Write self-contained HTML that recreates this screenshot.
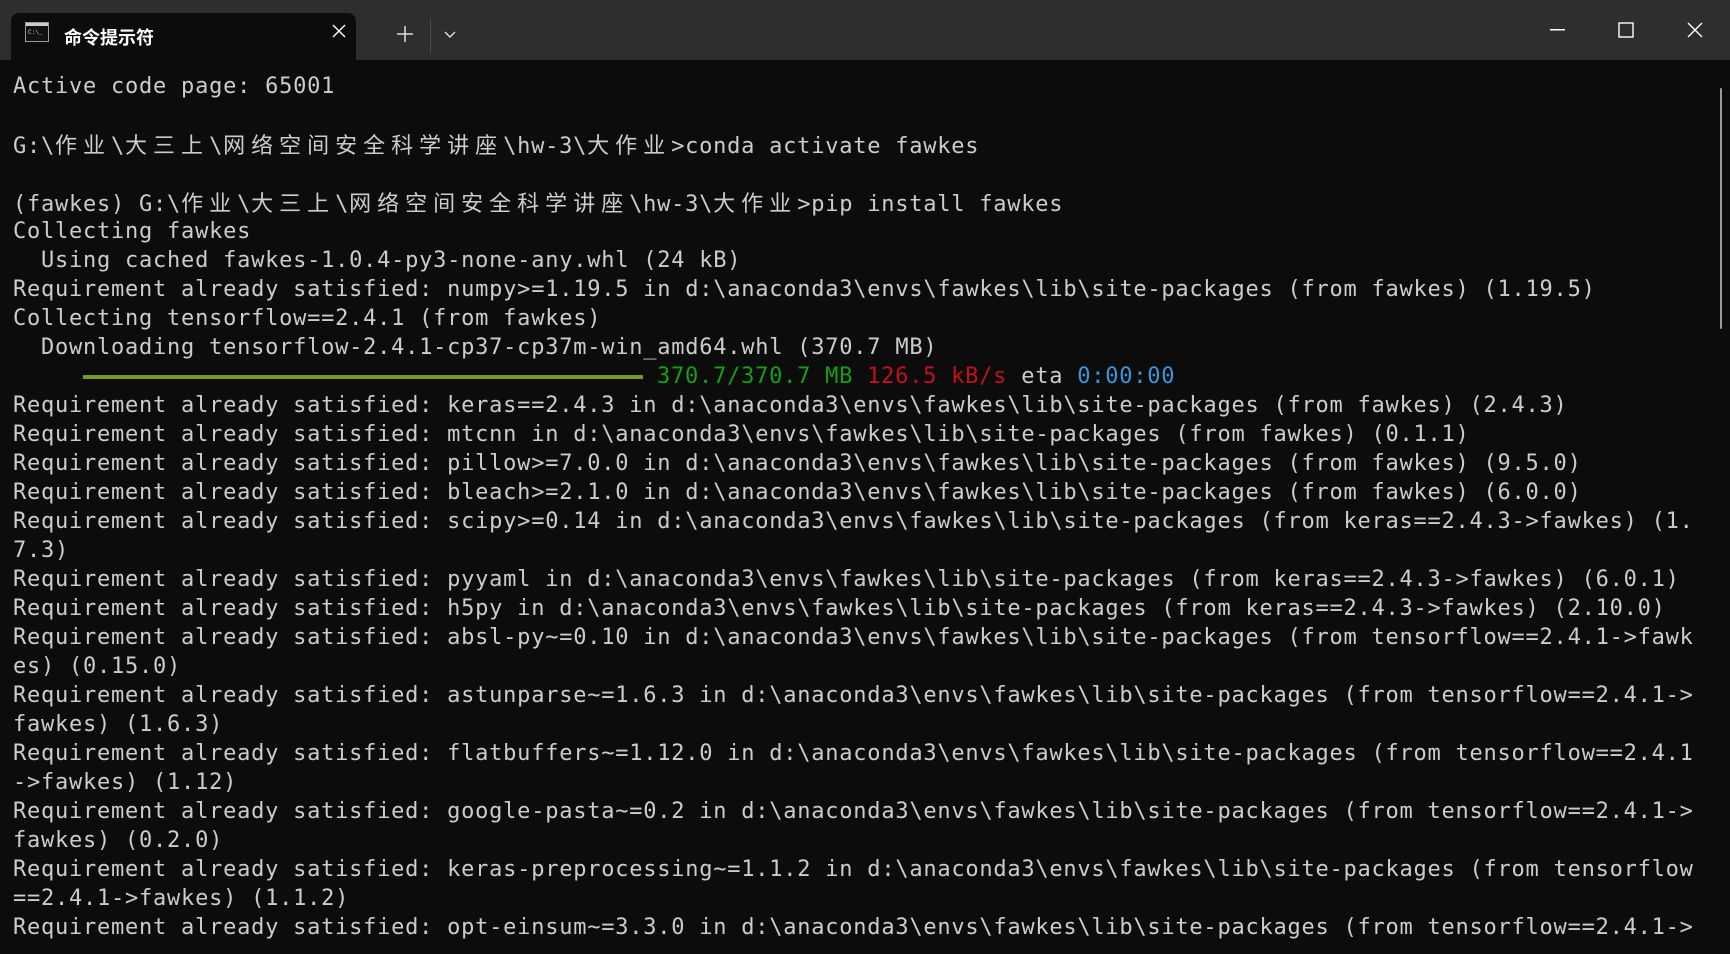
<!DOCTYPE html>
<html><head><meta charset="utf-8"><style>
html,body{margin:0;padding:0;background:#0c0c0c;width:1730px;height:954px;overflow:hidden}
#bar{position:absolute;left:0;top:0;width:1730px;height:60px;background:#2e2e2e}
#tab{position:absolute;left:11px;top:13px;width:345px;height:47px;background:#0c0c0c;border-radius:8px 8px 0 0}
#title{position:absolute;left:64px;top:24px;color:#fff;font:bold 18px "Liberation Sans","Noto Sans CJK SC",sans-serif}
#term{position:absolute;left:13px;top:72px;color:#cccccc;font-family:"DejaVu Sans Mono",monospace;font-size:22px;letter-spacing:0.76px;white-space:pre}
#term div{height:29px;line-height:29px}
.c{font-family:"Noto Sans CJK SC",sans-serif;letter-spacing:6px;font-size:22px}
.pb{display:inline-block;width:560px;height:4px;background:#729c1f;vertical-align:middle}
.g{color:#13a10e}.r{color:#c50f1f}.b{color:#3a96dd}
svg{position:absolute}
</style></head><body>
<div id="bar"></div>
<div id="tab"></div>
<svg style="left:25px;top:22px" width="24" height="20" viewBox="0 0 24 20"><rect x="0.5" y="0.5" width="23" height="19" fill="#111" stroke="#999"/><rect x="1" y="1" width="22" height="3" fill="#ccc"/><text x="3" y="12" font-size="6" fill="#ccc" font-family="Liberation Mono">C:\_</text></svg>
<div id="title">命令提示符</div>
<svg style="left:332px;top:24px" width="14" height="14"><path d="M1 1L13 13M13 1L1 13" stroke="#fff" stroke-width="1.4"/></svg>
<svg style="left:396px;top:25px" width="18" height="18"><path d="M9 1V17M1 9H17" stroke="#ddd" stroke-width="1.5"/></svg>
<div style="position:absolute;left:430px;top:19px;width:1px;height:34px;background:#4a4a4a"></div>
<svg style="left:444px;top:31px" width="12" height="8"><path d="M1 1L6 6L11 1" fill="none" stroke="#ddd" stroke-width="1.4"/></svg>
<svg style="left:1550px;top:29px" width="16" height="2"><rect width="15" height="1.5" fill="#fff"/></svg>
<svg style="left:1618px;top:22px" width="16" height="16"><rect x="1" y="1" width="14" height="14" fill="none" stroke="#fff" stroke-width="1.4"/></svg>
<svg style="left:1687px;top:22px" width="16" height="16"><path d="M1 1L15 15M15 1L1 15" stroke="#fff" stroke-width="1.4"/></svg>
<div style="position:absolute;left:1720px;top:88px;width:2px;height:241px;background:#9a9a9a;border-radius:1px"></div>
<div id="term"><div>Active code page: 65001</div><div> </div><div>G:\<span class="c">作业</span>\<span class="c">大三上</span>\<span class="c">网络空间安全科学讲座</span>\hw-3\<span class="c">大作业</span>&gt;conda activate fawkes</div><div> </div><div>(fawkes) G:\<span class="c">作业</span>\<span class="c">大三上</span>\<span class="c">网络空间安全科学讲座</span>\hw-3\<span class="c">大作业</span>&gt;pip install fawkes</div><div>Collecting fawkes</div><div>  Using cached fawkes-1.0.4-py3-none-any.whl (24 kB)</div><div>Requirement already satisfied: numpy&gt;=1.19.5 in d:\anaconda3\envs\fawkes\lib\site-packages (from fawkes) (1.19.5)</div><div>Collecting tensorflow==2.4.1 (from fawkes)</div><div>  Downloading tensorflow-2.4.1-cp37-cp37m-win_amd64.whl (370.7 MB)</div><div>     <span class="pb"></span> <span class="g">370.7/370.7 MB</span> <span class="r">126.5 kB/s</span> eta <span class="b">0:00:00</span></div><div>Requirement already satisfied: keras==2.4.3 in d:\anaconda3\envs\fawkes\lib\site-packages (from fawkes) (2.4.3)</div><div>Requirement already satisfied: mtcnn in d:\anaconda3\envs\fawkes\lib\site-packages (from fawkes) (0.1.1)</div><div>Requirement already satisfied: pillow&gt;=7.0.0 in d:\anaconda3\envs\fawkes\lib\site-packages (from fawkes) (9.5.0)</div><div>Requirement already satisfied: bleach&gt;=2.1.0 in d:\anaconda3\envs\fawkes\lib\site-packages (from fawkes) (6.0.0)</div><div>Requirement already satisfied: scipy&gt;=0.14 in d:\anaconda3\envs\fawkes\lib\site-packages (from keras==2.4.3-&gt;fawkes) (1.</div><div>7.3)</div><div>Requirement already satisfied: pyyaml in d:\anaconda3\envs\fawkes\lib\site-packages (from keras==2.4.3-&gt;fawkes) (6.0.1)</div><div>Requirement already satisfied: h5py in d:\anaconda3\envs\fawkes\lib\site-packages (from keras==2.4.3-&gt;fawkes) (2.10.0)</div><div>Requirement already satisfied: absl-py~=0.10 in d:\anaconda3\envs\fawkes\lib\site-packages (from tensorflow==2.4.1-&gt;fawk</div><div>es) (0.15.0)</div><div>Requirement already satisfied: astunparse~=1.6.3 in d:\anaconda3\envs\fawkes\lib\site-packages (from tensorflow==2.4.1-&gt;</div><div>fawkes) (1.6.3)</div><div>Requirement already satisfied: flatbuffers~=1.12.0 in d:\anaconda3\envs\fawkes\lib\site-packages (from tensorflow==2.4.1</div><div>-&gt;fawkes) (1.12)</div><div>Requirement already satisfied: google-pasta~=0.2 in d:\anaconda3\envs\fawkes\lib\site-packages (from tensorflow==2.4.1-&gt;</div><div>fawkes) (0.2.0)</div><div>Requirement already satisfied: keras-preprocessing~=1.1.2 in d:\anaconda3\envs\fawkes\lib\site-packages (from tensorflow</div><div>==2.4.1-&gt;fawkes) (1.1.2)</div><div>Requirement already satisfied: opt-einsum~=3.3.0 in d:\anaconda3\envs\fawkes\lib\site-packages (from tensorflow==2.4.1-&gt;</div></div>
</body></html>
